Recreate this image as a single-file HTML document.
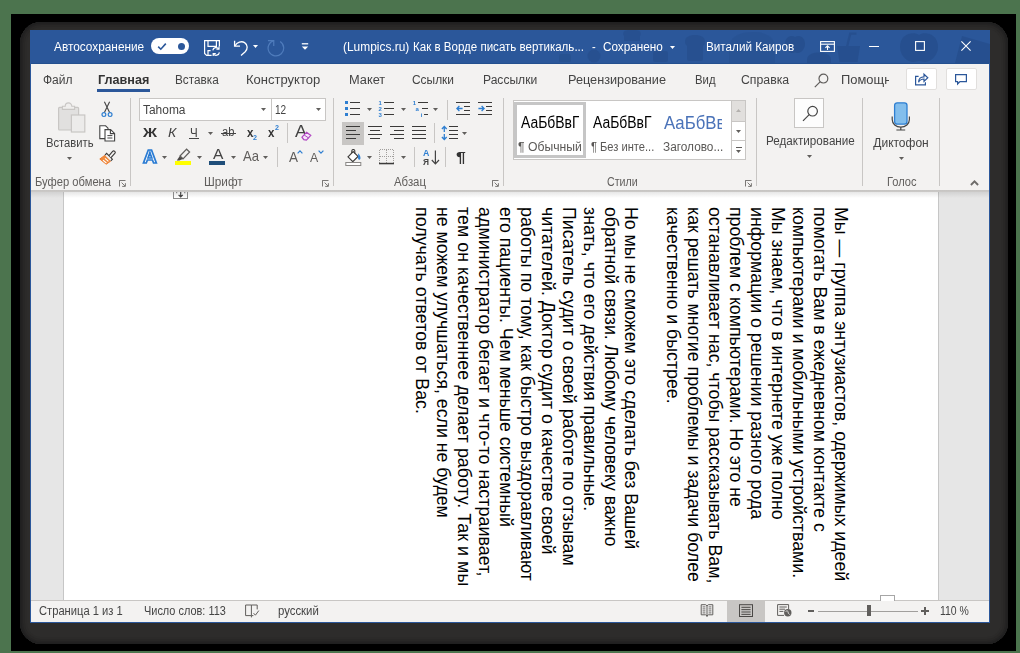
<!DOCTYPE html>
<html lang="ru">
<head>
<meta charset="utf-8">
<title>Word</title>
<style>
*{box-sizing:border-box;margin:0;padding:0}
html,body{width:1020px;height:653px;overflow:hidden}
body{background:#4c744e;font-family:"Liberation Sans",sans-serif;font-size:12px;color:#444;position:relative}
.abs{position:absolute}
.t{position:absolute;white-space:nowrap;line-height:1;transform-origin:0 0}
#black{left:11px;top:14px;width:1005px;height:637px;background:#000}
#shadow{left:20px;top:22px;width:988px;height:622px;background:#2d2c2b;border-radius:21px;box-shadow:inset 0 0 0 1.5px #202020,inset 0 0 0 3px #242323,inset 0 0 0 5px #282726,inset 0 0 0 7px #2b2a29}
#win{left:30px;top:30px;width:960px;height:593px;background:#f3f2f1;border:1px solid #2b579a;border-top:none;overflow:hidden}
#title{left:0;top:0;width:960px;height:34px;background:#2b579a;border-bottom:1px solid #24508f}
#doc{left:0;top:160px;width:958px;height:410px;background:#e6e6e6}
#page{left:32px;top:0;width:876px;height:410px;background:#fff;border-left:1px solid #c6c6c6;border-right:1px solid #c6c6c6}
#dshadow{left:0;top:160px;width:958px;height:8px;background:linear-gradient(#c6c4c2 0,#cbc9c7 2px,rgba(120,120,120,.18) 2px,rgba(160,160,160,0) 100%)}
#status{left:0;top:570px;width:958px;height:22px;background:#f3f2f1;border-top:1px solid #c8c6c4}
#txt{left:820.3px;top:17.1px;font-size:17.75px;line-height:20.95px;color:#000;white-space:nowrap;transform-origin:0 0;transform:rotate(90deg)}
#ov{left:0;top:0;width:1020px;height:653px;overflow:hidden;will-change:transform}
</style>
</head>
<body>
<div id="black" class="abs"></div>
<div id="shadow" class="abs"></div>
<div id="win" class="abs">
<div id="title" class="abs"></div>
<div id="doc" class="abs"><div id="page" class="abs"></div>
<div id="txt" class="abs">Мы — группа энтузиастов, одержимых идеей<br>
помогать Вам в ежедневном контакте с<br>
компьютерами и мобильными устройствами.<br>
Мы знаем, что в интернете уже полно<br>
информации о решении разного рода<br>
проблем с компьютерами. Но это не<br>
останавливает нас, чтобы рассказывать Вам,<br>
как решать многие проблемы и задачи более<br>
качественно и быстрее.<br>
&nbsp;<br>
Но мы не сможем это сделать без Вашей<br>
обратной связи. Любому человеку важно<br>
знать, что его действия правильные.<br>
<span style="letter-spacing:0.04px">Писатель судит о своей работе по отзывам</span><br>
читателей. Доктор судит о качестве своей<br>
<span style="letter-spacing:0.063px">работы по тому, как быстро выздоравливают</span><br>
его пациенты. Чем меньше системный<br>
<span style="letter-spacing:0.093px">администратор бегает и что-то настраивает,</span><br>
<span style="letter-spacing:0.075px">тем он качественнее делает работу. Так и мы</span><br>
не можем улучшаться, если не будем<br>
<span style="letter-spacing:0.054px">получать ответов от Вас.</span></div></div>
<div id="dshadow" class="abs"></div>
<div id="status" class="abs"></div>
</div>
<div id="ov" class="abs">
<!-- title -->
<svg class="abs" style="left:30px;top:30px;" width="960" height="33" viewBox="30 30 960 33"><g fill="#264e8c" opacity=".8">
<path d="M919 35c5-4 19-2 19 12c0 9-8 15-13 15c-3 0-4-1-6-1s-3 1-6 1c-5 0-13-6-13-15c0-14 14-16 19-12z"/>
<path d="M795 37c3-2.500 10-1 10 7c0 5-4 9-7 9c-1.500 0-2-.5-3-.5s-1.500 .5-3 .5c-3 0-7-4-7-9c0-8 7-9.500 10-7z"/>
<path d="M837 46h23l-2.500 16h-18z"/><path d="M846 46l3.400-13.500h7v2.200h-5.200l-2.800 11.300z"/>
<path d="M807 60c0-5 5-7.500 12-7.500s12 2.500 12 7.500v3h-24z"/>
<path d="M962 36l28 8v19h-35z"/>
<path d="M685 42c0-5 4-7 10-7s10 2 10 7c0 2-1 3-2 4v13c0 1-1 2-2 2h-12c-1 0-2-1-2-2v-13c-1-1-2-2-2-4z" opacity=".8"/>
<path d="M729 48c0-10 9-16 24-16s22 6 22 16v15h-46z" opacity=".45"/>
<path d="M624 36c-2-3 0-6 4-6h8c4 0 6 3 4 6v5h-16z" opacity=".8"/>
<rect x="653" y="51" width="15" height="11" rx="2" opacity=".8"/>
<circle cx="594" cy="56" r="6.500" opacity=".8"/>
<rect x="559" y="54" width="12" height="8" rx="1.500" opacity=".7"/>
</g></svg>
<div class="t" style="left:53.60px;top:40.84px;font-size:12px;color:#fff;transform:scaleX(0.9861);">Автосохранение</div>
<div class="abs" style="left:151px;top:38px;width:38px;height:16px;background:#fff;border-radius:8px;"></div>
<svg class="abs" style="left:157px;top:41.5px;" width="10" height="9" viewBox="0 0 10 9"><path d="M1.2 4.6L3.8 7.2L8.8 1.6" fill="none" stroke="#2b579a" stroke-width="1.6"/></svg>
<div class="abs" style="left:177.5px;top:42.5px;width:7px;height:7px;background:#2b579a;border-radius:50%;"></div>
<svg class="abs" style="left:203px;top:39px;" width="18" height="18" viewBox="0 0 18 18"><g fill="none" stroke="#fff" stroke-width="1.200">
<path d="M8.600 16.400H3.600L1.600 14.400V1.600H16.400V7.400"/><path d="M5 1.600V7.400H13.400V1.600"/><path d="M5 16V11.600H7.600"/>
<path d="M9.800 11.400a3.300 3.300 0 0 1 6-1.400M16.400 13.400a3.300 3.300 0 0 1-6 1.400"/><path d="M16 7.600V10.200H13.400M10.200 17V14.600H12.800"/></g></svg>
<svg class="abs" style="left:232.5px;top:39px;" width="16" height="17" viewBox="0 0 16 17"><g fill="none" stroke="#fff" stroke-width="1.3"><path d="M1.6 1.8V7.2H7"/><path d="M1.9 7C4 3.4 8.4 1.6 11.6 3.6c3.4 2.2 3.2 6.6 0.6 9.2L8 16.4"/></g></svg>
<svg class="abs" style="left:253.0px;top:45.2px;" width="5" height="3" viewBox="0 0 5 3"><path d="M0 0H5L2.5 3Z" fill="#fff"/></svg>
<svg class="abs" style="left:266px;top:39px;" width="19" height="18" viewBox="0 0 19 18"><g fill="none" stroke="#4f7cbc" stroke-width="1.200"><path d="M14.150 2.560A7.800 7.800 0 1 1 7.750 1.600"/><path d="M1.950 1.600H7.750V7"/></g></svg>
<svg class="abs" style="left:300.5px;top:43px;" width="8" height="8" viewBox="0 0 8 8"><path d="M0.8 0.8H7.2" stroke="#fff" stroke-width="1.3"/><path d="M0.8 3.4H7.2L4 6.8Z" fill="#fff"/></svg>
<div class="t" style="left:343.30px;top:41.04px;font-size:12px;color:#fff;transform:scaleX(0.9944);">(Lumpics.ru)</div>
<div class="t" style="left:413.40px;top:41.04px;font-size:12px;color:#fff;transform:scaleX(0.9623);">Как в Ворде писать вертикаль...</div>
<div class="t" style="left:592.30px;top:40.84px;font-size:12px;color:#fff;transform:scaleX(0.9260);">-</div>
<div class="t" style="left:603.20px;top:40.84px;font-size:12px;color:#fff;transform:scaleX(0.9779);">Сохранено</div>
<svg class="abs" style="left:670.0px;top:45.5px;" width="5" height="3" viewBox="0 0 5 3"><path d="M0 0H5L2.5 3Z" fill="#fff"/></svg>
<div class="t" style="left:706.20px;top:40.84px;font-size:12px;color:#fff;transform:scaleX(0.9749);">Виталий Каиров</div>
<svg class="abs" style="left:820px;top:40.5px;" width="15" height="11" viewBox="0 0 15 11"><g fill="none" stroke="#fff" stroke-width="1.1"><rect x="0.6" y="0.6" width="13.8" height="9.8"/><path d="M0.6 3.2H14.4"/><path d="M7.5 9V4.8M5.4 6.8L7.5 4.7L9.6 6.8"/></g></svg>
<div class="abs" style="left:869px;top:46px;width:10px;height:1.2px;background:#fff;"></div>
<svg class="abs" style="left:915px;top:41px;" width="10" height="10" viewBox="0 0 10 10"><rect x="0.6" y="0.6" width="8.8" height="8.8" fill="none" stroke="#fff" stroke-width="1.1"/></svg>
<svg class="abs" style="left:961px;top:41px;" width="10" height="10" viewBox="0 0 10 10"><path d="M0.4 0.4L9.6 9.6M9.6 0.4L0.4 9.6" stroke="#fff" stroke-width="1.1"/></svg>
<!-- tabs -->
<div class="t" style="left:43.00px;top:74.14px;font-size:12px;color:#444;">Файл</div>
<div class="t" style="left:97.50px;top:74.14px;font-size:12px;color:#333;font-weight:700;transform:scaleX(1.0512);">Главная</div>
<div class="abs" style="left:97px;top:89px;width:53px;height:3px;background:#2b579a;"></div>
<div class="t" style="left:174.50px;top:74.14px;font-size:12px;color:#444;transform:scaleX(0.9820);">Вставка</div>
<div class="t" style="left:246.30px;top:74.14px;font-size:12px;color:#444;transform:scaleX(1.0846);">Конструктор</div>
<div class="t" style="left:348.80px;top:74.14px;font-size:12px;color:#444;transform:scaleX(1.0660);">Макет</div>
<div class="t" style="left:411.80px;top:74.14px;font-size:12px;color:#444;transform:scaleX(0.9942);">Ссылки</div>
<div class="t" style="left:483.30px;top:74.14px;font-size:12px;color:#444;transform:scaleX(1.0063);">Рассылки</div>
<div class="t" style="left:567.50px;top:74.14px;font-size:12px;color:#444;transform:scaleX(1.0577);">Рецензирование</div>
<div class="t" style="left:694.50px;top:74.14px;font-size:12px;color:#444;transform:scaleX(0.9443);">Вид</div>
<div class="t" style="left:741.30px;top:74.14px;font-size:12px;color:#444;transform:scaleX(1.0239);">Справка</div>
<svg class="abs" style="left:813.5px;top:72.5px;" width="15" height="15" viewBox="0 0 15 15"><g fill="none" stroke="#605e5c" stroke-width="1.2"><circle cx="9.4" cy="5.6" r="4.4"/><path d="M6.3 8.7L0.8 14.2"/></g></svg>
<div class="abs" style="left:840px;top:66px;width:49.4px;height:26px;overflow:hidden">
<div class="t" style="left:0.50px;top:8.14px;font-size:12px;color:#444;transform:scaleX(1.0775);">Помощник</div>
</div>
<div class="abs" style="left:905.5px;top:68px;width:31px;height:22px;background:#fff;border:1px solid #e1dfdd;border-radius:2px;"></div>
<div class="abs" style="left:945.5px;top:68px;width:31px;height:22px;background:#fff;border:1px solid #e1dfdd;border-radius:2px;"></div>
<svg class="abs" style="left:914px;top:72px;" width="15" height="14" viewBox="0 0 15 14"><g fill="none" stroke="#2b579a" stroke-width="1.2"><path d="M4.6 4.4H1.6V12.8H11.4V10.2"/><path d="M4.6 10.2c0-3.6 2-5.4 5.4-5.4V2.2L13.8 5.8L10 9.4V7c-2.6 0-4.2 0.8-5.4 3.2z"/></g></svg>
<svg class="abs" style="left:954px;top:73px;" width="14" height="13" viewBox="0 0 14 13"><path d="M1.6 1.6H12.4V8.6H6L3.6 11V8.6H1.6Z" fill="none" stroke="#2b579a" stroke-width="1.2"/></svg>
<!-- ribbon -->
<svg class="abs" style="left:57px;top:101.5px;" width="29" height="31" viewBox="0 0 29 31"><rect x="1.600" y="5.400" width="20" height="22.600" rx="1" fill="#e1e0df" stroke="#c8c6c4" stroke-width="1.200"/>
<path d="M5.400 7.400V4.200H8.200a3.300 3.300 0 0 1 6.600 0H17.600V7.400Z" fill="#efeeed" stroke="#c8c6c4" stroke-width="1.100"/>
<rect x="14.400" y="13" width="13.400" height="17" fill="#ecebea" stroke="#c8c6c4" stroke-width="1.200"/></svg>
<div class="t" style="left:45.50px;top:136.84px;font-size:12px;color:#444;transform:scaleX(0.9339);">Вставить</div>
<svg class="abs" style="left:67.0px;top:156.8px;" width="5" height="3" viewBox="0 0 5 3"><path d="M0 0H5L2.5 3Z" fill="#605e5c"/></svg>
<svg class="abs" style="left:101px;top:101px;" width="12" height="17" viewBox="0 0 12 17"><g fill="none" stroke="#444" stroke-width="1.1"><path d="M3.4 0.8L8.6 11.6M8.6 0.8L3.4 11.6"/></g>
<g fill="none" stroke="#2f7fd1" stroke-width="1.2"><circle cx="2.9" cy="13.6" r="1.9"/><circle cx="9.1" cy="13.6" r="1.9"/></g></svg>
<svg class="abs" style="left:99px;top:124.5px;" width="17" height="17" viewBox="0 0 17 17"><g fill="#f3f2f1" stroke="#444" stroke-width="1.1"><path d="M0.800 13.600V0.800H6.600L9 3.200V13.600Z" fill="#fff"/><path d="M6 16V4.6H11.6L15.6 8.4V16Z" fill="#fff"/><path d="M11.4 4.8V8.6H15.4" fill="none"/></g>
<path d="M8.4 10.6H13.4M8.4 13H13.4" stroke="#444" stroke-width="1"/></svg>
<svg class="abs" style="left:99px;top:148.5px;" width="17" height="16" viewBox="0 0 17 16"><path d="M0.800 10L6 6.200L11.800 12L7.200 15.200Z" fill="#f08a3c" stroke="#ed7d31" stroke-width="1"/>
<path d="M4 11.200L7.400 14M6 9.400L9.400 12.400" stroke="#fff" stroke-width="1.100"/>
<path d="M6 6.200L7.600 4.400L13.400 10.200L11.800 12" fill="#f3f2f1" stroke="#3b3a39" stroke-width="1.100"/>
<path d="M10 6.600L13.600 2.400A1.400 1.400 0 0 1 15.800 4.400L12 8.600" fill="#f3f2f1" stroke="#3b3a39" stroke-width="1.100"/></svg>
<div class="t" style="left:34.50px;top:175.64px;font-size:12px;color:#605e5c;transform:scaleX(0.9321);">Буфер обмена</div>
<svg class="abs" style="left:119px;top:179.5px;" width="7" height="7" viewBox="0 0 7 7"><path d="M0.5 2.5V0.5H2.5M0.5 0.5H6.5M0.5 0.5V6.5" fill="none" stroke="#7a7876" stroke-width="1"/><path d="M2.6 2.6L6 6M6.4 3.2V6.4H3.2" fill="none" stroke="#7a7876" stroke-width="1"/></svg>
<div class="abs" style="left:130px;top:98px;width:1px;height:88px;background:#c8c6c4;"></div>
<div class="abs" style="left:139px;top:98px;width:133px;height:23px;background:#fff;border:1px solid #c8c6c4;"></div>
<div class="t" style="left:143.00px;top:103.84px;font-size:12px;color:#444;transform:scaleX(0.9956);">Tahoma</div>
<svg class="abs" style="left:260.9px;top:108.3px;" width="5" height="3" viewBox="0 0 5 3"><path d="M0 0H5L2.5 3Z" fill="#605e5c"/></svg>
<div class="abs" style="left:271px;top:98px;width:55px;height:23px;background:#fff;border:1px solid #c8c6c4;"></div>
<div class="t" style="left:274.60px;top:103.84px;font-size:12px;color:#444;transform:scaleX(0.8392);">12</div>
<svg class="abs" style="left:316.0px;top:108.3px;" width="5" height="3" viewBox="0 0 5 3"><path d="M0 0H5L2.5 3Z" fill="#605e5c"/></svg>
<div class="t" style="left:143.00px;top:126.14px;font-size:13.3px;color:#333;font-weight:700;transform:scaleX(1.1647);">Ж</div>
<div class="t" style="left:167.50px;top:125.57px;font-size:13.5px;color:#444;font-style:italic;transform:scaleX(1.0432);">К</div>
<div class="t" style="left:190.30px;top:125.57px;font-size:13.5px;color:#444;transform:scaleX(0.8557);">Ч</div>
<div class="abs" style="left:189px;top:138.2px;width:9.8px;height:1.1px;background:#444;"></div>
<svg class="abs" style="left:208.0px;top:131.5px;" width="5" height="3" viewBox="0 0 5 3"><path d="M0 0H5L2.5 3Z" fill="#605e5c"/></svg>
<div class="t" style="left:221.80px;top:126.42px;font-size:12.5px;color:#444;transform:scaleX(0.8919);">ab</div>
<div class="abs" style="left:220.5px;top:132.6px;width:15px;height:1.1px;background:#444;"></div>
<div class="t" style="left:246.80px;top:125.77px;font-size:13.5px;color:#333;font-weight:700;transform:scaleX(0.8525);">x</div>
<div class="t" style="left:253.40px;top:134.03px;font-size:8px;color:#2f7fd1;font-weight:700;transform:scaleX(0.8991);">2</div>
<div class="t" style="left:268.20px;top:125.77px;font-size:13.5px;color:#333;font-weight:700;transform:scaleX(0.8525);">x</div>
<div class="t" style="left:275.40px;top:124.43px;font-size:8px;color:#2f7fd1;font-weight:700;transform:scaleX(0.8991);">2</div>
<div class="abs" style="left:287px;top:123px;width:1px;height:20px;background:#c8c6c4;"></div>
<div class="t" style="left:294.60px;top:122.61px;font-size:17px;color:#444;transform:scaleX(1.0494);">A</div>
<svg class="abs" style="left:301px;top:131px;" width="11" height="10" viewBox="0 0 11 10"><path d="M1 6.2L5.6 1.2L9.8 4.4L5.4 9.2L2.8 8.6Z" fill="#f6e6fb" stroke="#b146c2" stroke-width="1.2"/><path d="M3.2 4L7.6 7" stroke="#b146c2" stroke-width="1"/></svg>
<div class="t" style="left:142.6px;top:147.69px;font-size:18.8px;font-weight:700;color:#fff;-webkit-text-stroke:1.7px #2b7cd3;transform:scaleX(1.02)">A</div>
<svg class="abs" style="left:162.0px;top:156.3px;" width="5" height="3" viewBox="0 0 5 3"><path d="M0 0H5L2.5 3Z" fill="#605e5c"/></svg>
<svg class="abs" style="left:175px;top:148px;" width="17" height="13" viewBox="0 0 17 13"><path d="M5 8L11.600 1.200L14.600 4L8 10.800Z" fill="#f3f2f1" stroke="#605e5c" stroke-width="1.200"/><path d="M4.600 8.200L7.800 11L4.400 12.600H1.800Z" fill="#4a4846"/></svg>
<div class="abs" style="left:175px;top:160.8px;width:16.3px;height:3.8px;background:#ffff00;"></div>
<svg class="abs" style="left:197.0px;top:156.3px;" width="5" height="3" viewBox="0 0 5 3"><path d="M0 0H5L2.5 3Z" fill="#605e5c"/></svg>
<div class="t" style="left:212.80px;top:146.48px;font-size:15.5px;color:#444;transform:scaleX(1.0059);">A</div>
<div class="abs" style="left:209.3px;top:160.8px;width:15.8px;height:3.8px;background:#1f4e79;"></div>
<svg class="abs" style="left:230.7px;top:156.3px;" width="5" height="3" viewBox="0 0 5 3"><path d="M0 0H5L2.5 3Z" fill="#605e5c"/></svg>
<div class="t" style="left:243.40px;top:149.33px;font-size:14.5px;color:#605e5c;transform:scaleX(0.9022);">Aa</div>
<svg class="abs" style="left:262.5px;top:156.3px;" width="5" height="3" viewBox="0 0 5 3"><path d="M0 0H5L2.5 3Z" fill="#605e5c"/></svg>
<div class="abs" style="left:277px;top:147px;width:1px;height:20px;background:#c8c6c4;"></div>
<div class="t" style="left:288.60px;top:150.13px;font-size:14.5px;color:#605e5c;transform:scaleX(0.9305);">A</div>
<svg class="abs" style="left:296.5px;top:149.5px;" width="6" height="4" viewBox="0 0 6 4"><path d="M0.6 3.4L3 0.9L5.4 3.4" fill="none" stroke="#2f7fd1" stroke-width="1.2"/></svg>
<div class="t" style="left:310.00px;top:151.40px;font-size:13px;color:#605e5c;transform:scaleX(0.9456);">A</div>
<svg class="abs" style="left:317.6px;top:150px;" width="6" height="4" viewBox="0 0 6 4"><path d="M0.6 0.6L3 3.1L5.4 0.6" fill="none" stroke="#2f7fd1" stroke-width="1.2"/></svg>
<div class="t" style="left:204.30px;top:175.64px;font-size:12px;color:#605e5c;transform:scaleX(0.9802);">Шрифт</div>
<svg class="abs" style="left:322.3px;top:179.5px;" width="7" height="7" viewBox="0 0 7 7"><path d="M0.5 2.5V0.5H2.5M0.5 0.5H6.5M0.5 0.5V6.5" fill="none" stroke="#7a7876" stroke-width="1"/><path d="M2.6 2.6L6 6M6.4 3.2V6.4H3.2" fill="none" stroke="#7a7876" stroke-width="1"/></svg>
<div class="abs" style="left:333px;top:98px;width:1px;height:88px;background:#c8c6c4;"></div>
<svg class="abs" style="left:345px;top:101px;" width="16" height="16" viewBox="0 0 16 16"><g fill="#2f7fd1" shape-rendering="crispEdges"><rect x="0" y="0" width="3" height="3"/><rect x="0" y="6" width="3" height="3"/><rect x="0" y="12" width="3" height="3"/></g><g fill="#3b3a39" shape-rendering="crispEdges"><rect x="5" y="1" width="10" height="1"/><rect x="5" y="7" width="10" height="1"/><rect x="5" y="13" width="10" height="1"/></g></svg>
<svg class="abs" style="left:367.0px;top:108.1px;" width="5" height="3" viewBox="0 0 5 3"><path d="M0 0H5L2.5 3Z" fill="#605e5c"/></svg>
<svg class="abs" style="left:378px;top:101px;" width="17" height="16" viewBox="0 0 17 16"><g fill="#3b3a39" shape-rendering="crispEdges"><rect x="6" y="1" width="10" height="1"/><rect x="6" y="7" width="10" height="1"/><rect x="6" y="13" width="10" height="1"/></g><g fill="#2f7fd1" font-family="Liberation Sans" font-size="6" font-weight="700"><text x="0.4" y="4.4">1</text><text x="0.4" y="10.3">2</text><text x="0.4" y="16.2">3</text></g></svg>
<svg class="abs" style="left:401.0px;top:108.1px;" width="5" height="3" viewBox="0 0 5 3"><path d="M0 0H5L2.5 3Z" fill="#605e5c"/></svg>
<svg class="abs" style="left:412px;top:101px;" width="17" height="16" viewBox="0 0 17 16"><g fill="#3b3a39" shape-rendering="crispEdges"><rect x="6" y="1" width="10" height="1"/><rect x="10" y="7" width="6" height="1"/><rect x="12" y="13" width="4" height="1"/></g><g fill="#2f7fd1" font-family="Liberation Sans" font-size="6" font-weight="700"><text x="0.8" y="4.4">1</text><text x="3.6" y="10">a</text><text x="8.8" y="15.8">i</text></g></svg>
<svg class="abs" style="left:432.7px;top:108.1px;" width="5" height="3" viewBox="0 0 5 3"><path d="M0 0H5L2.5 3Z" fill="#605e5c"/></svg>
<div class="abs" style="left:447px;top:99.5px;width:1px;height:20.0px;background:#c8c6c4;"></div>
<svg class="abs" style="left:456px;top:101px;" width="15" height="16" viewBox="0 0 15 16"><g fill="#3b3a39" shape-rendering="crispEdges"><rect x="0" y="1" width="14" height="1"/><rect x="8" y="5" width="6" height="1"/><rect x="8" y="9" width="6" height="1"/><rect x="0" y="13" width="14" height="1"/></g><path d="M6.6 7.500H0.800M3.400 5L0.900 7.500L3.400 10" fill="none" stroke="#2f7fd1" stroke-width="1.3"/></svg>
<svg class="abs" style="left:478px;top:101px;" width="15" height="16" viewBox="0 0 15 16"><g fill="#3b3a39" shape-rendering="crispEdges"><rect x="0" y="1" width="14" height="1"/><rect x="8" y="5" width="6" height="1"/><rect x="8" y="9" width="6" height="1"/><rect x="0" y="13" width="14" height="1"/></g><path d="M0.400 7.500H6.200M3.600 5L6.100 7.500L3.600 10" fill="none" stroke="#2f7fd1" stroke-width="1.3"/></svg>
<div class="abs" style="left:342px;top:122px;width:22.3px;height:23px;background:#c8c6c4;"></div>
<svg class="abs" style="left:346px;top:126px;" width="15" height="14" viewBox="0 0 15 14"><g fill="#3b3a39" shape-rendering="crispEdges"><rect x="0" y="0" width="14" height="1"/><rect x="0" y="4" width="10" height="1"/><rect x="0" y="8" width="14" height="1"/><rect x="0" y="12" width="10" height="1"/></g></svg>
<svg class="abs" style="left:368px;top:126px;" width="15" height="14" viewBox="0 0 15 14"><g fill="#3b3a39" shape-rendering="crispEdges"><rect x="0" y="0" width="14" height="1"/><rect x="2" y="4" width="10" height="1"/><rect x="0" y="8" width="14" height="1"/><rect x="2" y="12" width="10" height="1"/></g></svg>
<svg class="abs" style="left:390px;top:126px;" width="15" height="14" viewBox="0 0 15 14"><g fill="#3b3a39" shape-rendering="crispEdges"><rect x="0" y="0" width="14" height="1"/><rect x="4" y="4" width="10" height="1"/><rect x="0" y="8" width="14" height="1"/><rect x="4" y="12" width="10" height="1"/></g></svg>
<svg class="abs" style="left:412px;top:126px;" width="15" height="14" viewBox="0 0 15 14"><g fill="#3b3a39" shape-rendering="crispEdges"><rect x="0" y="0" width="14" height="1"/><rect x="0" y="4" width="14" height="1"/><rect x="0" y="8" width="14" height="1"/><rect x="0" y="12" width="14" height="1"/></g></svg>
<div class="abs" style="left:434px;top:123px;width:1px;height:20px;background:#c8c6c4;"></div>
<svg class="abs" style="left:441px;top:125px;" width="18" height="16" viewBox="0 0 18 16"><g fill="#3b3a39" shape-rendering="crispEdges"><rect x="8" y="1" width="9" height="1"/><rect x="8" y="5" width="9" height="1"/><rect x="8" y="9" width="9" height="1"/><rect x="8" y="13" width="9" height="1"/></g><path d="M3.300 1.400V7M3.300 9V14.600M0.900 4L3.300 1.500L5.700 4M0.900 12L3.300 14.500L5.700 12" fill="none" stroke="#2f7fd1" stroke-width="1.3"/></svg>
<svg class="abs" style="left:462.0px;top:131.8px;" width="5" height="3" viewBox="0 0 5 3"><path d="M0 0H5L2.5 3Z" fill="#605e5c"/></svg>
<svg class="abs" style="left:345px;top:148.5px;" width="17" height="17" viewBox="0 0 17 17"><path d="M3 7.800L8.200 2.600L13 7.400L7.800 12.600Z" fill="#fff" stroke="#3b3a39" stroke-width="1.2"/><path d="M6.800 4V2a1.500 1.500 0 0 1 3 0V4.600" fill="none" stroke="#3b3a39" stroke-width="1.100"/>
<path d="M13 4.200c2 1.800 2.800 3.600 2.400 5.600c-.3 1.200-1.800 1.300-2.200 .2c-.5-1.400 .4-2.600-.2-5.800z" fill="#2f7fd1"/>
<rect x="0.800" y="13.500" width="15" height="3" fill="#fff" stroke="#8a8886" stroke-width="1"/></svg>
<svg class="abs" style="left:367.0px;top:156.3px;" width="5" height="3" viewBox="0 0 5 3"><path d="M0 0H5L2.5 3Z" fill="#605e5c"/></svg>
<svg class="abs" style="left:379px;top:149px;" width="16" height="16" viewBox="0 0 16 16"><path d="M0.500 0.500H14.500V14M0.500 0.500V14M7.500 0.500V14M0.500 7.500H14.500" fill="none" stroke="#a19f9d" stroke-width="1" stroke-dasharray="1 1" shape-rendering="crispEdges"/><rect x="0" y="13.800" width="15" height="1.500" fill="#3b3a39"/></svg>
<svg class="abs" style="left:401.0px;top:156.3px;" width="5" height="3" viewBox="0 0 5 3"><path d="M0 0H5L2.5 3Z" fill="#605e5c"/></svg>
<div class="abs" style="left:414px;top:147px;width:1px;height:20px;background:#c8c6c4;"></div>
<div class="t" style="left:422.60px;top:148.16px;font-size:9.5px;color:#2f7fd1;font-weight:700;transform:scaleX(0.9328);">A</div>
<div class="t" style="left:422.80px;top:156.56px;font-size:9.5px;color:#444;font-weight:700;transform:scaleX(0.8787);">Я</div>
<svg class="abs" style="left:430.5px;top:149.5px;" width="9" height="15" viewBox="0 0 9 15"><path d="M4.4 0.4V13.6M0.8 10L4.4 13.8L8 10" fill="none" stroke="#444" stroke-width="1.2"/></svg>
<div class="abs" style="left:445px;top:147px;width:1px;height:20px;background:#c8c6c4;"></div>
<div class="t" style="left:456.40px;top:149.67px;font-size:14.8px;color:#333;font-weight:700;transform:scaleX(1.1907);">¶</div>
<div class="t" style="left:394.30px;top:175.64px;font-size:12px;color:#605e5c;transform:scaleX(0.9506);">Абзац</div>
<svg class="abs" style="left:492.2px;top:179.5px;" width="7" height="7" viewBox="0 0 7 7"><path d="M0.5 2.5V0.5H2.5M0.5 0.5H6.5M0.5 0.5V6.5" fill="none" stroke="#7a7876" stroke-width="1"/><path d="M2.6 2.6L6 6M6.4 3.2V6.4H3.2" fill="none" stroke="#7a7876" stroke-width="1"/></svg>
<div class="abs" style="left:503px;top:98px;width:1px;height:88px;background:#c8c6c4;"></div>
<div class="abs" style="left:513px;top:100px;width:233px;height:59.5px;background:#fff;border:1px solid #c8c6c4;"></div>
<div class="abs" style="left:513.6px;top:101.8px;width:72.4px;height:56px;border:3.8px solid #c6c6c6;"></div>
<div class="abs" style="left:517px;top:104px;width:62.2px;height:30px;overflow:hidden">
<div class="t" style="left:4.00px;top:10.96px;font-size:16px;color:#000;transform:scaleX(0.8710);">АаБбВвГг</div>
</div>
<div class="abs" style="left:589px;top:104px;width:62.7px;height:30px;overflow:hidden">
<div class="t" style="left:3.80px;top:10.96px;font-size:16px;color:#000;transform:scaleX(0.8710);">АаБбВвГг</div>
</div>
<div class="abs" style="left:660px;top:104px;width:62.4px;height:30px;overflow:hidden">
<div class="t" style="left:4.00px;top:9.94px;font-size:18.5px;color:#4a72b8;transform:scaleX(0.9058);">АаБбВвГг</div>
</div>
<div class="t" style="left:518.00px;top:141.04px;font-size:12px;color:#5a5856;transform:scaleX(1.0156);">¶ Обычный</div>
<div class="t" style="left:590.50px;top:141.04px;font-size:12px;color:#5a5856;transform:scaleX(0.9273);">¶ Без инте...</div>
<div class="t" style="left:663.00px;top:141.04px;font-size:12px;color:#5a5856;transform:scaleX(0.9858);">Заголово...</div>
<div class="abs" style="left:731px;top:100px;width:1px;height:59.5px;background:#c8c6c4;"></div>
<div class="abs" style="left:732px;top:101px;width:13px;height:19.5px;background:#e1dfdd;"></div>
<div class="abs" style="left:731px;top:120.5px;width:15px;height:1px;background:#c8c6c4;"></div>
<div class="abs" style="left:731px;top:140px;width:15px;height:1px;background:#c8c6c4;"></div>
<svg class="abs" style="left:736px;top:108.5px;" width="5" height="3" viewBox="0 0 5 3"><path d="M0 3H5L2.5 0Z" fill="#b3b0ad"/></svg>
<svg class="abs" style="left:736.2px;top:129.5px;" width="5" height="3" viewBox="0 0 5 3"><path d="M0 0H5L2.5 3Z" fill="#605e5c"/></svg>
<div class="abs" style="left:736px;top:146.6px;width:5.6px;height:1.1px;background:#605e5c;"></div>
<svg class="abs" style="left:736.2px;top:149.5px;" width="5" height="3" viewBox="0 0 5 3"><path d="M0 0H5L2.5 3Z" fill="#605e5c"/></svg>
<div class="t" style="left:606.80px;top:175.64px;font-size:12px;color:#605e5c;transform:scaleX(0.8881);">Стили</div>
<svg class="abs" style="left:745.2px;top:179.5px;" width="7" height="7" viewBox="0 0 7 7"><path d="M0.5 2.5V0.5H2.5M0.5 0.5H6.5M0.5 0.5V6.5" fill="none" stroke="#7a7876" stroke-width="1"/><path d="M2.6 2.6L6 6M6.4 3.2V6.4H3.2" fill="none" stroke="#7a7876" stroke-width="1"/></svg>
<div class="abs" style="left:756px;top:98px;width:1px;height:88px;background:#c8c6c4;"></div>
<div class="abs" style="left:794px;top:98px;width:30px;height:30px;background:#fdfdfd;border:1px solid #c8c6c4;"></div>
<svg class="abs" style="left:802px;top:104.5px;" width="17" height="17" viewBox="0 0 17 17"><g fill="none" stroke="#444" stroke-width="1.2"><circle cx="10.6" cy="6.2" r="4.8"/><path d="M7.2 9.6L1 15.8"/></g></svg>
<div class="t" style="left:765.50px;top:134.84px;font-size:12px;color:#444;transform:scaleX(0.9715);">Редактирование</div>
<svg class="abs" style="left:807.3px;top:154.9px;" width="5" height="3" viewBox="0 0 5 3"><path d="M0 0H5L2.5 3Z" fill="#605e5c"/></svg>
<div class="abs" style="left:862px;top:98px;width:1px;height:88px;background:#c8c6c4;"></div>
<svg class="abs" style="left:890px;top:101.5px;" width="22" height="30" viewBox="0 0 22 30"><rect x="4.6" y="0.8" width="12.4" height="21.4" rx="2.6" fill="#83beec" stroke="#2f7fd1" stroke-width="1.3"/>
<path d="M2.200 14.600V17.600a8.600 7.600 0 0 0 17.200 0V14.600" fill="none" stroke="#444" stroke-width="1.200"/><path d="M10.800 25.200V28M6.400 28H15.200" stroke="#444" stroke-width="1.2" fill="none"/></svg>
<div class="t" style="left:873.30px;top:136.84px;font-size:12px;color:#444;">Диктофон</div>
<svg class="abs" style="left:899.0px;top:157.0px;" width="5" height="3" viewBox="0 0 5 3"><path d="M0 0H5L2.5 3Z" fill="#605e5c"/></svg>
<div class="t" style="left:886.80px;top:175.64px;font-size:12px;color:#605e5c;transform:scaleX(0.9243);">Голос</div>
<div class="abs" style="left:939px;top:98px;width:1px;height:88px;background:#c8c6c4;"></div>
<svg class="abs" style="left:970px;top:179px;" width="10" height="7" viewBox="0 0 10 7"><path d="M0.900 6L4.500 2.300L8.100 6" fill="none" stroke="#6e6c6a" stroke-width="1.900"/></svg>
<!-- status -->
<div class="t" style="left:38.80px;top:604.84px;font-size:12px;color:#444;transform:scaleX(0.9307);">Страница 1 из 1</div>
<div class="t" style="left:143.50px;top:604.84px;font-size:12px;color:#444;transform:scaleX(0.9107);">Число слов: 113</div>
<svg class="abs" style="left:244.5px;top:603.5px;" width="15" height="14" viewBox="0 0 15 14"><g fill="none" stroke="#605e5c" stroke-width="1"><path d="M0.6 1H6.4V11.6H0.6Z"/><path d="M6.4 1H12.2V5.4M6.4 11.6H8.4"/><path d="M8.6 9.2L10.4 11.2L13.8 6.6"/><path d="M6.4 11.6V13.4"/></g></svg>
<div class="t" style="left:277.70px;top:604.84px;font-size:12px;color:#444;transform:scaleX(0.9475);">русский</div>
<svg class="abs" style="left:700px;top:604px;" width="14" height="13.5" viewBox="0 0 14 13.5"><g fill="none" stroke="#605e5c" stroke-width="1"><path d="M1.200 0.700H5.600L7 1.800L8.400 0.700H12.800V10.800H8.400L7 11.800L5.600 10.800H1.200Z"/><path d="M7 1.800V13"/><path d="M2.600 2.900H5.400M2.600 4.900H5.400M2.600 6.900H5.400M2.600 8.900H5.400M8.600 2.900H11.400M8.600 4.900H11.400M8.600 6.900H11.400M8.600 8.900H11.400" stroke-width="0.900"/></g></svg>
<div class="abs" style="left:727px;top:601px;width:37.7px;height:21.4px;background:#c8c6c4;"></div>
<svg class="abs" style="left:739px;top:604px;" width="14" height="13" viewBox="0 0 14 13"><g fill="none" stroke="#4a4846" stroke-width="1"><rect x="0.500" y="0.700" width="13" height="11.800"/><path d="M2.400 3.300H11.600M2.400 5.650H11.600M2.400 8H11.600M2.400 10.350H11.600"/></g></svg>
<svg class="abs" style="left:776.5px;top:604px;" width="15" height="13" viewBox="0 0 15 13"><g fill="none" stroke="#605e5c" stroke-width="1"><path d="M7 11.4H0.6V0.6H11.6V5"/><path d="M2.4 3H9.8M2.4 5.2H8M2.4 7.4H6.4"/></g><circle cx="10.8" cy="8.8" r="3.7" fill="#605e5c"/><path d="M8.6 7.4c1.4-1 3-.2 2.6 1.2c-.4 1 1 1 1.6 2" fill="none" stroke="#f3f2f1" stroke-width="0.9"/></svg>
<div class="abs" style="left:808px;top:610.3px;width:6.4px;height:1.6px;background:#605e5c;"></div>
<div class="abs" style="left:818px;top:610.8px;width:99.5px;height:1px;background:#a19f9d;"></div>
<div class="abs" style="left:867px;top:604.6px;width:4.4px;height:11.2px;background:#605e5c;"></div>
<div class="abs" style="left:921px;top:610.3px;width:7.8px;height:1.6px;background:#605e5c;"></div>
<div class="abs" style="left:924.1px;top:607.2px;width:1.6px;height:7.8px;background:#605e5c;"></div>
<div class="t" style="left:940.30px;top:604.84px;font-size:12px;color:#444;transform:scaleX(0.8722);">110 %</div>
<div class="abs" style="left:880px;top:595px;width:15px;height:6px;background:#fff;border:1px solid #a6a6a6;border-bottom:none;"></div>
<div class="abs" style="left:173px;top:191.5px;width:15.4px;height:7.3px;border:1px solid #8a8a8a;border-top:none;"></div>
<svg class="abs" style="left:176px;top:192px;" width="10" height="6" viewBox="0 0 10 6"><path d="M4.700 0V4.600M2.600 2.800L4.700 5L6.800 2.800" fill="none" stroke="#444" stroke-width="1.200"/><rect x="0.200" y="0.200" width="1" height="1" fill="#555"/><rect x="8.300" y="0.200" width="1" height="1" fill="#555"/></svg>
</div>
</body>
</html>
